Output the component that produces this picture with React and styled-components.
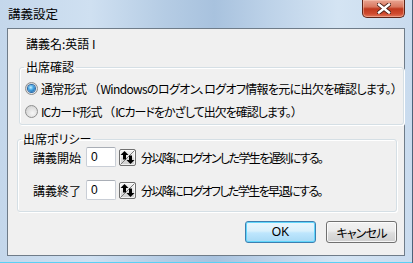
import styled, { createGlobalStyle } from 'styled-components';

const GlobalStyle = createGlobalStyle`
  html, body { margin: 0; padding: 0; }
  body {
    width: 413px;
    height: 263px;
    overflow: hidden;
    font-family: "Noto Sans CJK JP", "Liberation Sans", sans-serif;
    font-size: 12px;
    color: #000;
    background: #fff;
  }
  * { box-sizing: border-box; }
`;

const Window = styled.div`
  width: 413px;
  height: 263px;
  display: flex;
  flex-direction: column;
  background: linear-gradient(90deg, #c4d7eb 0%, #cfe0f1 22%, #b5cce4 40%, #a8c2de 52%, #bed3e9 66%, #d4e4f3 82%, #c9dbee 100%);
  border-right: 1px solid #4d6278;
  box-shadow: inset 0 -6px 0 -5px #5ad0f5;
`;

const TitleBar = styled.div`
  height: 28px;
  display: flex;
  align-items: flex-start;
  justify-content: space-between;
  padding-left: 8px;
  padding-right: 7px;
`;

const Title = styled.div`
  margin-top: 6px;
  font-size: 12.5px;
  line-height: 16px;
  color: #000;
  font-feature-settings: 'palt';
`;

const CloseButton = styled.div`
  width: 43px;
  height: 18px;
  display: flex;
  align-items: center;
  justify-content: center;
  border: 1px solid #5e2418;
  border-top: none;
  border-radius: 0 0 5px 5px;
  background: linear-gradient(180deg, #e9a592 0%, #d9785f 40%, #c0391e 52%, #cf4a2e 80%, #e0755a 100%);
  box-shadow: inset 0 0 0 1px rgba(255, 210, 190, 0.45);
`;

const Client = styled.div`
  margin-left: 7px;
  width: 398px;
  height: 228px;
  border: 1px solid #6f7c89;
  background: #f0f0f0;
  display: flex;
  flex-direction: column;
`;

const NameLabel = styled.div`
  margin-top: 7px;
  padding-left: 18px;
  line-height: 16px;
  font-feature-settings: 'palt';
`;

const Group = styled.fieldset`
  margin: ${p => p.$top}px ${p => p.$right}px 0 ${p => p.$left}px;
  padding: ${p => p.$padTop}px 0 ${p => p.$padBottom}px 0;
  width: 380px;
  border: 1px solid #d5dfe5;
  border-radius: 3px;
  box-shadow: inset 1px 1px 0 #fff, 1px 1px 0 #fff;
  display: flex;
  flex-direction: column;
  gap: ${p => p.$gap}px;
`;

const Legend = styled.legend`
  margin-left: ${p => p.$indent}px;
  padding: 0 2px;
  line-height: 16px;
  font-feature-settings: 'palt';
`;

const RadioRow = styled.label`
  height: 18px;
  padding-left: 5px;
  display: flex;
  align-items: center;
  gap: 3px;
  white-space: nowrap;
  letter-spacing: ${p => p.$squeeze}px;
  font-feature-settings: 'palt';
`;

const Wide = styled.span`
  font-feature-settings: normal;
  letter-spacing: 0;
`;

const Radio = styled.span`
  width: 13px;
  height: 13px;
  flex: none;
  border-radius: 50%;
  border: 1px solid #8e8f8f;
  background: radial-gradient(circle at 60% 65%, #f6f6f6 0%, #dedede 55%, #c8c8c8 100%);
  display: flex;
  align-items: center;
  justify-content: center;

  &::after {
    content: '';
    width: 7px;
    height: 7px;
    border-radius: 50%;
    display: ${p => (p.$checked ? 'block' : 'none')};
    background: radial-gradient(circle at 40% 35%, #c4f0ff 0%, #47a8e6 40%, #0f4f94 100%);
    box-shadow: 0 0 0 1px #2a6aa8;
  }
`;

const PolicyRow = styled.div`
  height: 20px;
  padding-left: 15px;
  display: flex;
  align-items: center;
  white-space: nowrap;
  font-feature-settings: 'palt';
`;

const RowLabel = styled.span`
  width: 53px;
  flex: none;
`;

const NumberBox = styled.div`
  width: 30px;
  height: 20px;
  flex: none;
  border: 1px solid #c9ced6;
  border-top-color: #a9aeb6;
  border-radius: 2px;
  background: #fff;
  padding-left: 4px;
  line-height: 18px;
  font-family: "Liberation Sans", sans-serif;
  font-size: 12px;
`;

const SpinButton = styled.div`
  width: 17px;
  height: 17px;
  margin-left: 3px;
  flex: none;
  border: 1px solid #707070;
  border-radius: 2px;
  background: linear-gradient(180deg, #f2f2f2 0%, #ebebeb 45%, #dddddd 55%, #cfcfcf 100%);
  box-shadow: inset 0 0 0 1px rgba(255, 255, 255, 0.7);
  display: flex;
  align-items: center;
  justify-content: center;
`;

const RowText = styled.span`
  margin-left: 5px;
  letter-spacing: -1.6px;
`;

const ButtonBar = styled.div`
  margin-top: 9px;
  margin-right: 7px;
  display: flex;
  justify-content: flex-end;
  gap: 10px;
`;

const Button = styled.div`
  width: 71px;
  height: 22px;
  display: flex;
  align-items: center;
  justify-content: center;
  border-radius: 3px;
  border: 1px solid ${p => (p.$primary ? '#3c7fb1' : '#707070')};
  background: ${p =>
    p.$primary
      ? 'linear-gradient(180deg, #eaf6fd 0%, #d9f0fc 45%, #bee6fd 55%, #a7d9f5 100%)'
      : 'linear-gradient(180deg, #f2f2f2 0%, #ebebeb 45%, #dddddd 55%, #cfcfcf 100%)'};
  box-shadow: inset 0 0 0 1px ${p => (p.$primary ? '#62d6fb' : 'rgba(255,255,255,0.8)')};
  font-family: ${p => (p.$primary ? '"Liberation Sans", sans-serif' : 'inherit')};
  font-size: 12px;
  letter-spacing: ${p => (p.$primary ? '0' : '-0.8px')};
  font-feature-settings: 'palt';
`;

function CloseIcon() {
  return (
    <svg width="14" height="11" viewBox="0 0 14 11">
      <path d="M2 1.5 L12 9.5 M12 1.5 L2 9.5" stroke="#4a1f16" strokeWidth="4.2" strokeLinecap="square" />
      <path d="M2 1.5 L12 9.5 M12 1.5 L2 9.5" stroke="#fff" strokeWidth="2.4" strokeLinecap="square" />
    </svg>
  );
}

function SpinIcon() {
  return (
    <svg width="15" height="15" viewBox="0 0 15 15">
      <path d="M0.5 14.5 L14.5 0.5" stroke="#7a7a7a" strokeWidth="1" />
      <path d="M4.5 1 L0.5 5 H3 V9.5 H6 V5 H8.5 Z" fill="#000" />
      <path d="M10.5 14 L14.5 10 H12 V5.5 H9 V10 H6.5 Z" fill="#000" />
    </svg>
  );
}

export default function App() {
  return (
    <>
      <GlobalStyle />
      <Window>
        <TitleBar>
          <Title>講義設定</Title>
          <CloseButton>
            <CloseIcon />
          </CloseButton>
        </TitleBar>
        <Client>
          <NameLabel>講義名:英語 I</NameLabel>
          <Group $top={7} $right={5} $left={11} $padTop={4} $padBottom={4} $gap={5}>
            <Legend $indent={4}>出席確認</Legend>
            <RadioRow $squeeze={-0.65}>
              <Radio $checked />
              <span>
                通常形式 <Wide>（</Wide>Windowsのログオン、ログオフ情報を元に出欠を確認します。<Wide>）</Wide>
              </span>
            </RadioRow>
            <RadioRow $squeeze={-1}>
              <Radio />
              <span>
                ICカード形式 <Wide>（</Wide>ICカードをかざして出欠を確認します。<Wide>）</Wide>
              </span>
            </RadioRow>
          </Group>
          <Group $top={6} $right={7} $left={9} $padTop={0} $padBottom={11} $gap={13}>
            <Legend $indent={3}>出席ポリシー</Legend>
            <PolicyRow>
              <RowLabel>講義開始</RowLabel>
              <NumberBox>0</NumberBox>
              <SpinButton>
                <SpinIcon />
              </SpinButton>
              <RowText>分以降にログオンした学生を遅刻にする。</RowText>
            </PolicyRow>
            <PolicyRow>
              <RowLabel>講義終了</RowLabel>
              <NumberBox>0</NumberBox>
              <SpinButton>
                <SpinIcon />
              </SpinButton>
              <RowText>分以降にログオフした学生を早退にする。</RowText>
            </PolicyRow>
          </Group>
          <ButtonBar>
            <Button $primary>OK</Button>
            <Button>キャンセル</Button>
          </ButtonBar>
        </Client>
      </Window>
    </>
  );
}
